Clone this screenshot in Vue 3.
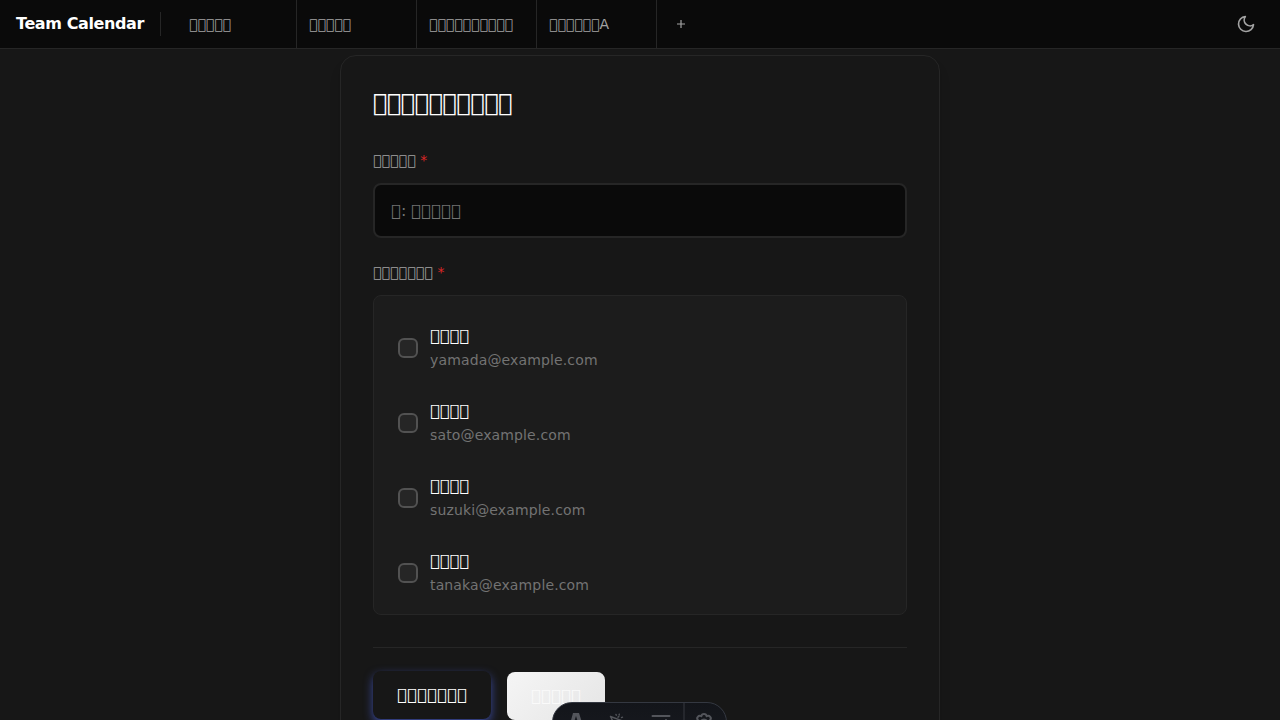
<script setup>
const box = (count) => '\u{10FF00}'.repeat(count)

const tabs = [box(5), box(5), box(10), box(6) + 'A']
const members = [
  'yamada@example.com',
  'sato@example.com',
  'suzuki@example.com',
  'tanaka@example.com',
]
</script>

<template>
  <div class="page">
    <header class="bar">
      <div class="brand">Team Calendar</div>
      <div class="rule"></div>
      <nav class="tabs">
        <div v-for="(t, i) in tabs" :key="i" class="tab">{{ t }}</div>
        <div class="plus">
          <svg width="16" height="16" viewBox="0 0 16 16"><path d="M8 4v8M4 8h8" /></svg>
        </div>
      </nav>
      <svg class="moon" width="20" height="20" viewBox="0 0 24 24">
        <path d="M21 12.79A9 9 0 1 1 11.21 3 7 7 0 0 0 21 12.79z" />
      </svg>
    </header>

    <main class="card">
      <h1>{{ box(10) }}</h1>
      <label>{{ box(5) }} <span>*</span></label>
      <div class="input">{{ box(1) }}<span>: </span>{{ box(5) }}</div>
      <label>{{ box(7) }} <span>*</span></label>
      <div class="list">
        <div v-for="m in members" :key="m" class="member">
          <div class="check"></div>
          <div>
            <div class="name">{{ box(4) }}</div>
            <div class="mail">{{ m }}</div>
          </div>
        </div>
      </div>
      <div class="actions">
        <div class="btn primary">{{ box(7) }}</div>
        <div class="btn light">{{ box(5) }}</div>
      </div>
    </main>

    <div class="toolbar">
      <div class="tool"><svg width="18" height="20" viewBox="0 0 18 20"><path class="fill" d="M7 1h6l4 12.5-3.7-1.2a9 9 0 0 0-6 0l-3.7 1.2zM10 4l-2 6.2h4z" /></svg></div>
      <div class="tool"><svg width="20" height="20" viewBox="0 0 20 20"><path class="thin" d="M2.5 4.5l13.5 5-5 3-2 5zM2.5 4.5l5 10M8 2.4l.3.8M11.3 2.2l-.2.8M10 5.2l.8-.5M13.5 5.6l1-.4" /></svg></div>
      <div class="tool"><svg width="20" height="20" viewBox="0 0 20 20"><path d="M1.5 4h17M1.5 11h17M15 8v6" /></svg></div>
      <div class="tool last"><svg width="20" height="20" viewBox="0 0 20 20"><path d="M7.3 4.2Q7.7 2 10 2T12.7 4.2Q14.8 3.2 16.2 4.8T16 8.2Q18 8.7 18 11T16 13.8Q16.8 15.8 15.2 17H4.8Q3.2 15.8 4 13.8Q2 13.3 2 11T4 8.2Q2.4 6.4 3.8 4.8T7.3 4.2Z" /><circle cx="10" cy="10.5" r="3" /></svg></div>
    </div>
  </div>
</template>

<style>
body { background: #171717; overflow: hidden; }
</style>

<style scoped>
.page {
  height: 720px;
  overflow: hidden;
  position: relative;
  box-sizing: border-box;
  background: #171717;
  font-family: "DejaVu Sans", sans-serif;
  color: #fff;
}
.page * { box-sizing: border-box; }
svg { display: block; }
svg path, svg circle { fill: none; stroke: currentColor; stroke-linecap: round; stroke-linejoin: round; }
.bar {
  height: 49px;
  border-bottom: 1px solid #262626;
  background: #0a0a0a;
  display: flex;
  align-items: center;
}
.brand {
  width: 144px;
  padding-left: 16px;
  font-size: 16px;
  font-weight: 700;
  line-height: 24px;
  letter-spacing: -0.4px;
  white-space: nowrap;
}
.rule { width: 1px; height: 24px; margin: 0 16px; background: #262626; }
.tabs { display: flex; height: 48px; flex: 1; }
.tab {
  width: 120px;
  padding: 1px 12px 0;
  border-right: 1px solid #262626;
  font-size: 14px;
  line-height: 47px;
  color: #a3a3a3;
  white-space: nowrap;
}
.plus { width: 48px; display: grid; place-items: center; color: #a3a3a3; }
.plus path { stroke-linecap: butt; stroke-width: 1.2; }
.moon { margin-right: 24px; color: #a3a3a3; }
.moon path { stroke-width: 2; }
.card {
  width: 600px;
  height: 740px;
  margin: 6px auto 0;
  padding: 31px 32px;
  border: 1px solid #262626;
  border-radius: 16px;
  background: #171717;
  box-shadow: 0 10px 15px -3px rgba(0, 0, 0, .1), 0 4px 6px -4px rgba(0, 0, 0, .1);
}
h1 { margin: 0 0 31px; font-size: 24px; font-weight: 400; line-height: 32px; letter-spacing: -0.48px; }
label { display: block; font-size: 14px; line-height: 20px; height: 20px; letter-spacing: .14px; color: #a3a3a3; white-space: pre; }
label span { color: #dc2626; }
.input {
  height: 55px;
  margin: 13px 0 24px;
  padding: 0 16px;
  border: 2px solid #262626;
  border-radius: 8px;
  background: #0a0a0a;
  color: #737373;
  font-size: 16px;
  line-height: 52px;
  letter-spacing: .4px;
  white-space: pre;
}
.input span { letter-spacing: -.25px; }
.list {
  height: 320px;
  margin: 13px 0 32px;
  padding: 14px 8px;
  border: 1px solid #262626;
  border-radius: 8px;
  background: #1c1c1c;
  overflow: hidden;
}
.member { height: 75px; padding: 0 16px; display: flex; align-items: center; gap: 12px; }
.check { width: 20px; height: 20px; border: 2px solid #525252; border-radius: 6px; background: #262626; }
.name { font-size: 16px; line-height: 24px; letter-spacing: .16px; margin-bottom: 2px; }
.mail { font-size: 14px; line-height: 21px; letter-spacing: .14px; color: #737373; }
.actions { display: flex; gap: 16px; padding-top: 24px; border-top: 1px solid #262626; }
.btn { height: 48px; padding: 0 24px; border-radius: 8px; font-size: 16px; line-height: 47px; letter-spacing: .4px; }
.primary { margin-top: -1px; background: #171717; box-shadow: 0 4px 10px rgba(70, 90, 200, .75); }
.light { background: linear-gradient(135deg, #f5f5f5, #e5e5e5); color: #fafafa; }
.toolbar {
  position: absolute;
  left: 552px;
  top: 702px;
  width: 175px;
  height: 40px;
  border: 1px solid #343841;
  border-radius: 20px;
  background: linear-gradient(#13151a, #181a20);
  display: flex;
  overflow: hidden;
  color: #53555b;
}
.tool { width: 43.3px; flex: none; padding-top: 9px; display: flex; justify-content: center; }
.tool path, .tool circle { stroke-width: 2; }
.tool .thin { stroke-width: 1.4; }
.tool .fill { fill: currentColor; stroke: none; fill-rule: evenodd; }
.last { width: 41px; border-left: 2px solid #25272d; }
</style>
